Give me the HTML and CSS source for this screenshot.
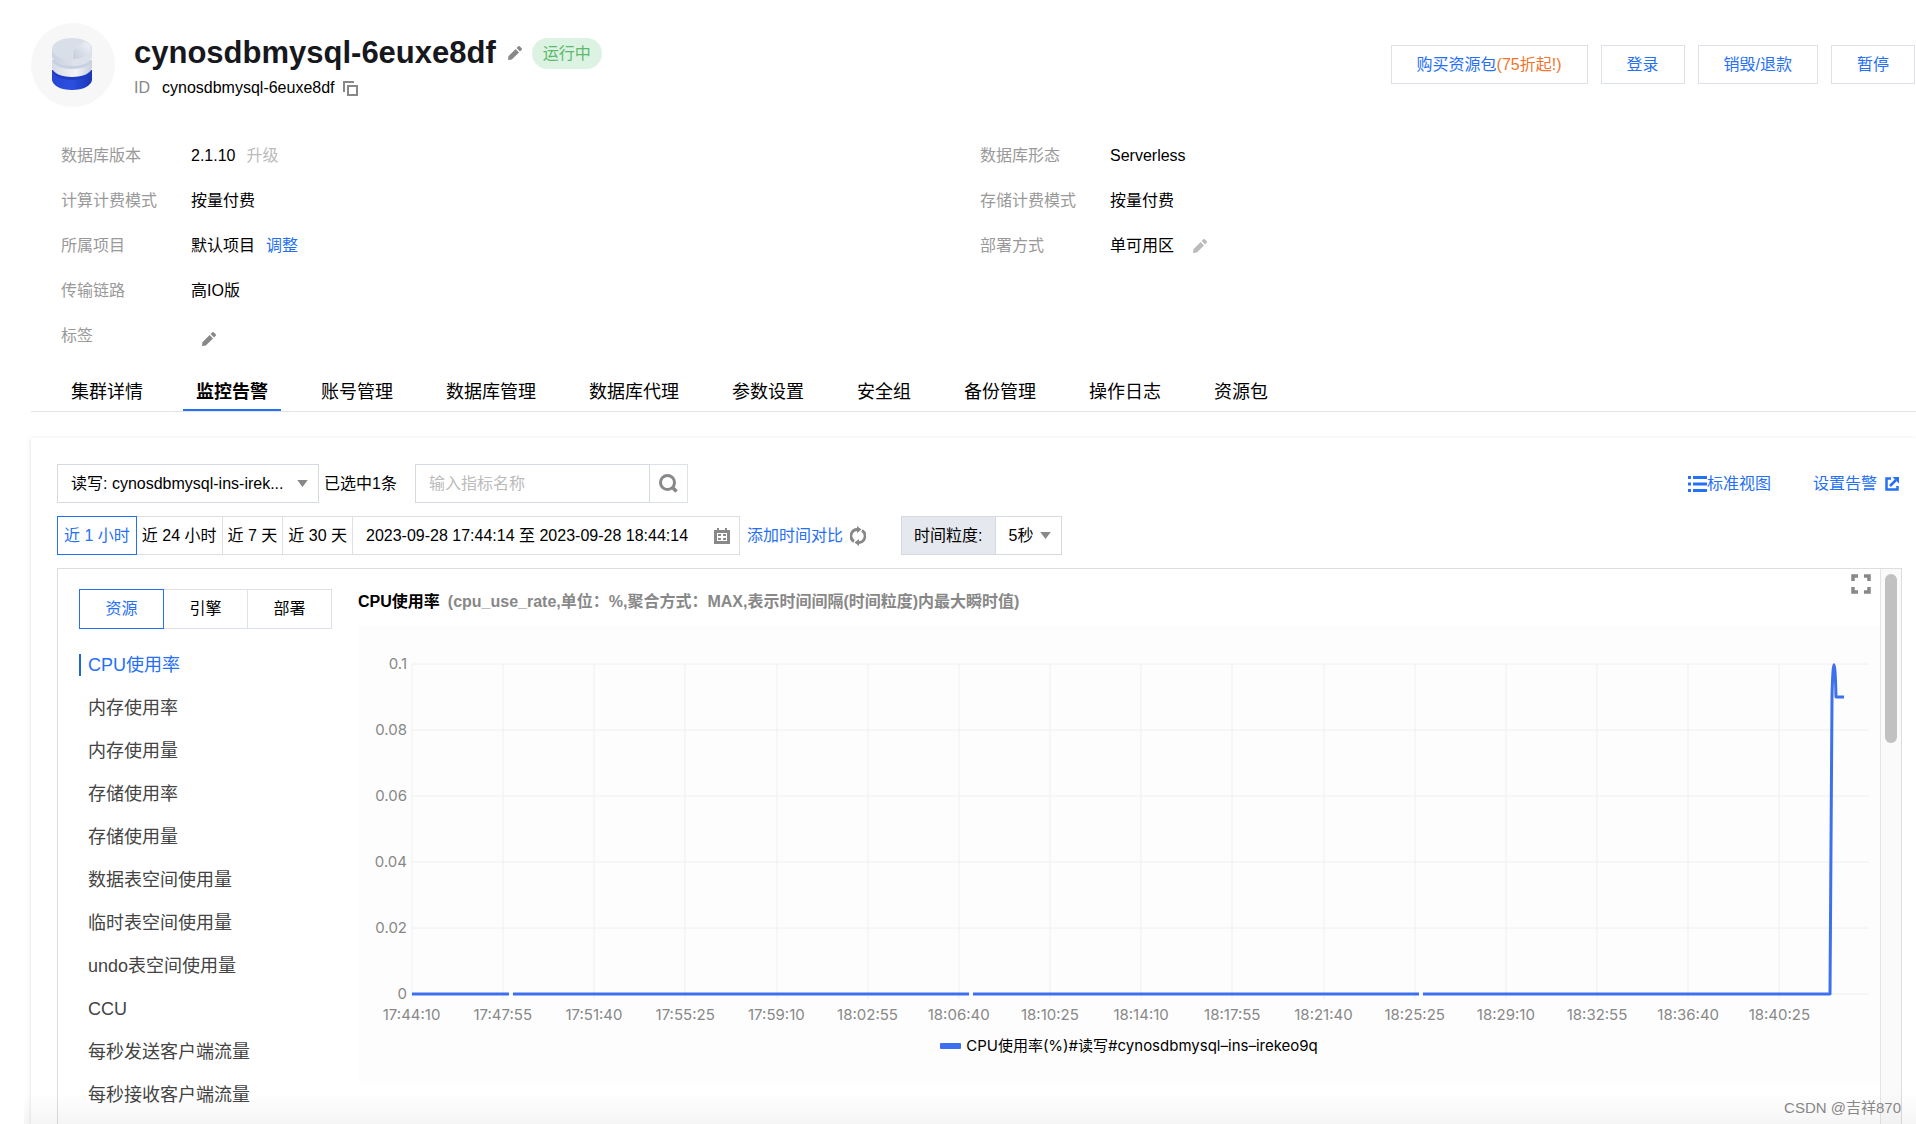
FILE: index.html
```html
<!DOCTYPE html>
<html lang="zh-CN">
<head>
<meta charset="utf-8">
<meta name="viewport" content="width=device-width, initial-scale=1">
<title>cynosdbmysql-6euxe8df - 监控告警</title>
<link rel="stylesheet" href="styles.css">
</head>
<body>
<svg class="sprite" aria-hidden="true">
  <symbol id="pencil" viewBox="0 0 14 14"><path d="M0 14l.4-3.800L7.600 3l3.400 3.400L3.800 13.600zM8.600 2l1.700-1.700a1 1 0 0 1 1.400 0l2 2a1 1 0 0 1 0 1.400L12 5.400z"/></symbol>
  <symbol id="caret" viewBox="0 0 12 8"><path d="M0 0h12L6 8z"/></symbol>
</svg>
<div class="app">
  <header class="header">
    <div class="avatar">
      <svg width="84" height="84" viewBox="0 0 84 84" aria-hidden="true">
        <defs>
          <linearGradient id="blue" x1="0" x2="1"><stop offset="0" stop-color="#2746d6"/><stop offset=".5" stop-color="#2b50e0"/><stop offset="1" stop-color="#1a36b4"/></linearGradient>
          <linearGradient id="white" x1="0" x2="1"><stop offset="0" stop-color="#d5dae6"/><stop offset=".6" stop-color="#f3f4f8"/><stop offset="1" stop-color="#c9cfdc"/></linearGradient>
          <linearGradient id="glass" x1="0" x2="1"><stop offset="0" stop-color="#cbd2e0"/><stop offset=".5" stop-color="#d9dfea"/><stop offset="1" stop-color="#dfe3ec"/></linearGradient>
          <linearGradient id="cut" x1="0" y1="1" x2="1" y2="0"><stop offset="0" stop-color="#c4ccdc"/><stop offset="1" stop-color="#f1f3f7"/></linearGradient>
        </defs>
        <path d="M21 47v10c1 6 9 10 20 10s19-4 20-10V47z" fill="url(#blue)"/>
        <path d="M21 47c1 6 9 10 20 10s19-4 20-10z" fill="#1f3cc4"/>
        <path d="M21 37v8c1 5 9 9 20 9s19-4 20-9v-8z" fill="url(#white)"/>
        <path d="M21 37c1 5 9 9 20 9s19-4 20-9z" fill="#c8d0e2"/>
        <path d="M21 26v8c1 5 9 9 20 9s19-4 20-9v-8z" fill="url(#glass)"/>
        <ellipse cx="41" cy="26" rx="20" ry="11" fill="#d8dfe9"/>
        <path d="M41 37V26l11-8c6 2 9 5 9 8v7c-3 7-11 10-20 10z" fill="#dce1ea"/>
        <path d="M42 36V27l12-8c5 2 6 5 5 9-2 5-9 8-17 8z" fill="url(#cut)"/>
      </svg>
    </div>
    <div class="identity">
      <div class="title-row">
        <h1 class="title">cynosdbmysql-6euxe8df</h1>
        <button class="icon-button" aria-label="编辑名称"><svg class="pencil"><use href="#pencil"/></svg></button>
        <span class="badge">运行中</span>
      </div>
      <div class="id-row">
        <span class="muted">ID</span>
        <span>cynosdbmysql-6euxe8df</span>
        <button class="icon-button copy" aria-label="复制"><svg width="15" height="15" viewBox="0 0 15 15"><path d="M1 11V1h10" fill="none" stroke="#888" stroke-width="2"/><path d="M5 5h9v9H5z" fill="none" stroke="#888" stroke-width="2"/></svg></button>
      </div>
    </div>
    <div class="actions">
      <button class="action">购买资源包<span class="promo">(75折起!)</span></button>
      <button class="action">登录</button>
      <button class="action">销毁/退款</button>
      <button class="action">暂停</button>
    </div>
  </header>

  <section class="info">
    <dl class="info-list">
      <div class="info-row"><dt>数据库版本</dt><dd>2.1.10<span class="disabled">升级</span></dd></div>
      <div class="info-row"><dt>计算计费模式</dt><dd>按量付费</dd></div>
      <div class="info-row"><dt>所属项目</dt><dd>默认项目<a class="link" href="#">调整</a></dd></div>
      <div class="info-row"><dt>传输链路</dt><dd>高IO版</dd></div>
      <div class="info-row"><dt>标签</dt><dd class="tag-value"><button class="icon-button" aria-label="编辑标签"><svg class="pencil"><use href="#pencil"/></svg></button></dd></div>
    </dl>
    <dl class="info-list">
      <div class="info-row"><dt>数据库形态</dt><dd>Serverless</dd></div>
      <div class="info-row"><dt>存储计费模式</dt><dd>按量付费</dd></div>
      <div class="info-row"><dt>部署方式</dt><dd class="deploy-value">单可用区<button class="icon-button" aria-label="编辑部署方式" disabled><svg class="pencil pale"><use href="#pencil"/></svg></button></dd></div>
    </dl>
  </section>

  <nav class="tabs">
    <a href="#">集群详情</a>
    <a href="#" class="active">监控告警</a>
    <a href="#">账号管理</a>
    <a href="#">数据库管理</a>
    <a href="#">数据库代理</a>
    <a href="#">参数设置</a>
    <a href="#">安全组</a>
    <a href="#">备份管理</a>
    <a href="#">操作日志</a>
    <a href="#">资源包</a>
  </nav>

  <main class="panel">
    <div class="toolbar">
      <div class="select instance">
        <select aria-label="实例"><option>读写: cynosdbmysql-ins-irek...</option></select>
        <svg class="caret"><use href="#caret"/></svg>
      </div>
      <span class="selected-count">已选中1条</span>
      <form class="search">
        <input type="text" placeholder="输入指标名称" aria-label="输入指标名称">
        <button type="button" aria-label="搜索"><svg width="19" height="19" viewBox="0 0 19 19"><circle cx="8.500" cy="8.500" r="7" fill="none" stroke="#888" stroke-width="3"/><path d="M13 13l4.500 4.500" stroke="#888" stroke-width="3.500"/></svg></button>
      </form>
      <div class="view-links">
        <a class="link view" href="#"><svg width="19" height="16" viewBox="0 0 19 16" fill="#2670f5" aria-hidden="true"><path d="M0 0h3v3H0zM0 6.500h3v3H0zM0 13h3v3H0zM5 0h14v3H5zM5 6.500h14v3H5zM5 13h14v3H5z"/></svg>标准视图</a>
        <a class="link alarm" href="#">设置告警<svg width="14" height="14" viewBox="0 0 14 14" aria-hidden="true"><path d="M6 1.500H1.500v11h11V9" fill="none" stroke="#2670f5" stroke-width="2.500"/><path d="M5 9l6-6" stroke="#2670f5" stroke-width="2.500"/><path d="M7.500 0H14v6.500z" fill="#2670f5"/></svg></a>
      </div>
    </div>

    <div class="toolbar">
      <div class="ranges">
        <button class="active">近 1 小时</button>
        <button>近 24 小时</button>
        <button>近 7 天</button>
        <button>近 30 天</button>
        <button class="date-range">2023-09-28 17:44:14 至 2023-09-28 18:44:14<svg width="16" height="16" viewBox="0 0 16 16" aria-hidden="true"><path d="M0 2h3V0h2v2h6V0h2v2h3v14H0zM3 5v8h10V5z" fill="#888" fill-rule="evenodd"/><path d="M4 6h3v2H4zM9 6h3v2H9zM4 10h3v2H4zM9 10h3v2H9z" fill="#888"/></svg></button>
      </div>
      <a class="link compare" href="#">添加时间对比</a>
      <button class="icon-button refresh" aria-label="刷新"><svg width="16" height="20" viewBox="0 0 16 20"><path d="M4 15.500A6.500 6.500 0 0 1 7.500 3.500M12 4.500A6.500 6.500 0 0 1 8.500 16.500" fill="none" stroke="#888" stroke-width="2.800"/><path d="M7 0l4.500 3.500L7 7zM9 13l-4.500 3.500L9 20z" fill="#888"/></svg></button>
      <label class="granularity" for="granularity">时间粒度:</label>
      <div class="select step">
        <select id="granularity"><option>5秒</option></select>
        <svg class="caret"><use href="#caret"/></svg>
      </div>
    </div>

    <div class="monitor">
      <aside class="side">
        <div class="side-tabs">
          <button class="active">资源</button>
          <button>引擎</button>
          <button>部署</button>
        </div>
        <ul class="metrics">
          <li><a href="#" class="active">CPU使用率</a></li>
          <li><a href="#">内存使用率</a></li>
          <li><a href="#">内存使用量</a></li>
          <li><a href="#">存储使用率</a></li>
          <li><a href="#">存储使用量</a></li>
          <li><a href="#">数据表空间使用量</a></li>
          <li><a href="#">临时表空间使用量</a></li>
          <li><a href="#">undo表空间使用量</a></li>
          <li><a href="#">CCU</a></li>
          <li><a href="#">每秒发送客户端流量</a></li>
          <li><a href="#">每秒接收客户端流量</a></li>
        </ul>
      </aside>
      <section class="detail">
        <div class="detail-head">
          <h2>CPU使用率<small>(cpu_use_rate,单位：%,聚合方式：MAX,表示时间间隔(时间粒度)内最大瞬时值)</small></h2>
          <button class="icon-button fullscreen" aria-label="全屏"><svg width="20" height="20" viewBox="0 0 20 20"><path d="M7 2H2v5M13 2h5v5M7 18H2v-5M13 18h5v-5" fill="none" stroke="#888" stroke-width="3.500"/></svg></button>
        </div>
        <div class="chart">
          <div class="plot-row">
            <div class="y-axis"><span>0.1</span><span>0.08</span><span>0.06</span><span>0.04</span><span>0.02</span><span>0</span></div>
            <svg class="plot" viewBox="0 0 1457 330" preserveAspectRatio="none" role="img" aria-label="CPU使用率">
              <path class="grid" d="M0 0H1457M0 66H1457M0 132H1457M0 198H1457M0 264H1457M0 330H1457M0 0V335M91 0V335M182 0V335M273 0V335M365 0V335M456 0V335M547 0V335M638 0V335M729 0V335M820 0V335M912 0V335M1003 0V335M1094 0V335M1185 0V335M1276 0V335M1367 0V335"/>
              <path class="series" d="M0 330H97M101 330H557M561 330H1007M1011 330H1418L1420 33C1421 -10 1423 -10 1424 33H1432"/>
            </svg>
          </div>
          <div class="x-axis"><span>17:44:10</span><span>17:47:55</span><span>17:51:40</span><span>17:55:25</span><span>17:59:10</span><span>18:02:55</span><span>18:06:40</span><span>18:10:25</span><span>18:14:10</span><span>18:17:55</span><span>18:21:40</span><span>18:25:25</span><span>18:29:10</span><span>18:32:55</span><span>18:36:40</span><span>18:40:25</span></div>
          <div class="legend"><span class="swatch"></span>CPU使用率(%)#读写#cynosdbmysql–ins–irekeo9q</div>
        </div>
      </section>
      <div class="scroll-track"><div class="scroll-thumb"></div></div>
    </div>
  </main>
  <div class="fade"></div>
  <div class="watermark">CSDN @吉祥870</div>
</div>
</body>
</html>
```

FILE: styles.css
```css
* {
  box-sizing: border-box;
}

body {
  margin: 0;
  background: #fff;
  color: #000;
  font-family: "Liberation Sans", "Noto Sans CJK SC", sans-serif;
  font-size: 16px;
  line-height: 22px;
}

button,
input,
select {
  margin: 0;
  padding: 0;
  border: 0;
  border-radius: 0;
  background: none;
  color: inherit;
  font: inherit;
}

a {
  color: inherit;
  text-decoration: none;
}

svg {
  display: block;
  flex: none;
}

.sprite {
  position: absolute;
  width: 0;
  height: 0;
}

.app {
  position: relative;
  display: flex;
  flex-direction: column;
  min-height: 100vh;
  overflow: hidden;
}

.link {
  color: #2670f5;
}

.muted {
  color: #888;
}

.icon-button {
  display: flex;
}

.pencil {
  width: 14px;
  height: 14px;
  fill: #888;
}

.pencil.pale {
  fill: #bbb;
}

.caret {
  width: 11px;
  height: 7px;
  fill: #888;
}

/* Header */

.header {
  display: flex;
  align-items: flex-start;
  padding: 23px 1px 0 31px;
}

.avatar {
  width: 84px;
  height: 84px;
  overflow: hidden;
  border-radius: 50%;
  background: #f7f7f7;
}

.identity {
  padding: 14px 0 0 19px;
}

.title-row {
  display: flex;
  align-items: center;
  height: 32px;
}

.title {
  margin: 0 12px 0 0;
  color: #16181d;
  font-size: 31px;
  line-height: 30px;
}

.badge {
  margin-left: 10px;
  padding: 0 11px;
  border-radius: 16px;
  background: #dcf3e4;
  color: #5bb96b;
  line-height: 31px;
}

.id-row {
  display: flex;
  align-items: center;
  gap: 12px;
  margin-top: 8px;
}

.copy {
  margin-left: -4px;
}

.actions {
  display: flex;
  gap: 13px;
  margin: 22px 0 0 auto;
}

.action {
  height: 39px;
  padding: 0 25px;
  border: 1px solid #dde1e8;
  color: #2670f5;
}

.promo {
  color: #f0742b;
}

/* Instance attributes */

.info {
  display: grid;
  grid-template-columns: 1fr 1fr;
  padding: 26px 17px 0 61px;
}

.info-list {
  margin: 0;
}

.info-row {
  display: flex;
  align-items: center;
  height: 45px;
}

.info-row dt {
  width: 130px;
  color: #999;
}

.info-row dd {
  display: flex;
  align-items: center;
  gap: 11px;
  margin: 0;
}

.info-row .tag-value {
  padding: 6px 0 0 11px;
}

.info-row .deploy-value {
  gap: 19px;
}

.disabled {
  color: #bbb;
}

/* Section tabs */

.tabs {
  display: flex;
  gap: 27px;
  margin: 17px 0 0 31px;
  padding-left: 27px;
  border-bottom: 1px solid #e5e5e5;
  font-size: 18px;
  line-height: 34px;
}

.tabs a {
  padding: 0 13px;
  border-bottom: 2px solid transparent;
}

.tabs .active {
  border-color: #2670f5;
  font-weight: 700;
}

/* Monitoring panel */

.panel {
  display: flex;
  flex: 1;
  flex-direction: column;
  gap: 13px;
  margin: 26px 0 0 31px;
  padding: 26px 14px 0 26px;
  box-shadow: 0 1px 4px rgba(0, 0, 0, 0.14);
}

.toolbar {
  display: flex;
  align-items: center;
  height: 39px;
}

.select {
  position: relative;
  height: 39px;
}

.select select {
  width: 100%;
  height: 100%;
  padding-left: 13px;
  border: 1px solid #d5d9e2;
  appearance: none;
}

.select .caret {
  position: absolute;
  top: 16px;
  right: 11px;
  pointer-events: none;
}

.instance {
  width: 262px;
}

.selected-count {
  margin: 0 18px 0 5px;
}

.search {
  display: flex;
}

.search input {
  width: 235px;
  height: 39px;
  padding: 0 13px;
  border: 1px solid #d5d9e2;
}

.search input::placeholder {
  color: #bbb;
}

.search button {
  display: grid;
  place-items: center;
  width: 38px;
  height: 39px;
  border: 1px solid #dde1e8;
  border-left: 0;
}

.view-links {
  display: flex;
  gap: 42px;
  margin-left: auto;
  padding-right: 3px;
}

.view-links a {
  display: flex;
  align-items: center;
}

.alarm {
  gap: 8px;
}

.ranges {
  display: flex;
}

.ranges button {
  height: 39px;
  padding: 0 5px;
  border: 1px solid #dddfe3;
  border-left: 0;
  white-space: nowrap;
}

.ranges .active {
  padding: 0 6px;
  border: 1px solid #2670f5;
  color: #2670f5;
}

.ranges .date-range {
  display: flex;
  align-items: center;
  gap: 26px;
  padding: 0 9px 0 13px;
}

.compare {
  margin: 0 7px;
}

.granularity {
  height: 39px;
  margin-left: 35px;
  padding: 0 12px;
  border: 1px solid #d5d9e2;
  border-right: 0;
  background: #e5e8ee;
  line-height: 38px;
}

.step {
  width: 67px;
}

/* Metrics box */

.monitor {
  display: flex;
  flex: 1;
  border: 1px solid #ddd;
  border-bottom: 0;
}

.side {
  width: 300px;
  padding: 20px 26px 0 21px;
}

.side-tabs {
  display: flex;
}

.side-tabs button {
  flex: 1;
  height: 40px;
  border: 1px solid #dde1e8;
  border-left: 0;
}

.side-tabs .active {
  border: 1px solid #2670f5;
  color: #2670f5;
}

.metrics {
  margin: 14px 0 0;
  padding: 0;
  color: #444;
  font-size: 18px;
  list-style: none;
}

.metrics li {
  display: flex;
  align-items: center;
  height: 43px;
}

.metrics a {
  padding-left: 7px;
  border-left: 2px solid transparent;
}

.metrics .active {
  border-color: #1f66d6;
  color: #2670f5;
}

.detail {
  flex: 1;
  min-width: 0;
}

.detail-head {
  display: flex;
  align-items: flex-start;
  justify-content: space-between;
  height: 57px;
  padding: 5px 9px 0 0;
}

.detail-head h2 {
  margin: 17px 0 0;
  font-size: 16px;
  line-height: 22px;
}

.detail-head small {
  margin-left: 8px;
  color: #888;
  font-size: 16px;
}

.chart {
  height: 457px;
  padding-top: 38px;
  background: #fdfdfd;
  font-family: Inter, "Noto Sans CJK SC", sans-serif;
  font-size: 15px;
}

.plot-row {
  display: flex;
  padding-right: 11px;
}

.y-axis {
  display: flex;
  flex-direction: column;
  justify-content: space-between;
  width: 54px;
  height: 352px;
  margin: -11px 0;
  padding-right: 5px;
  color: #888;
  text-align: right;
}

.plot {
  flex: 1;
  min-width: 0;
  height: 330px;
  overflow: visible;
}

.plot path {
  fill: none;
  vector-effect: non-scaling-stroke;
}

.grid {
  stroke: #f0f0f0;
  stroke-width: 1;
}

.series {
  stroke: #3d70f0;
  stroke-width: 3;
  stroke-linejoin: round;
}

.x-axis {
  display: grid;
  grid-template-columns: repeat(16, 1fr);
  margin: 10px 55px 0 8px;
  color: #888;
  text-align: center;
}

.legend {
  display: flex;
  align-items: center;
  justify-content: center;
  gap: 5px;
  margin-top: 9px;
  padding-left: 20px;
}

.legend,
.x-axis {
  line-height: 22px;
}

.swatch {
  width: 21px;
  height: 6px;
  border-radius: 1px;
  background: #3d70f0;
}

.scroll-track {
  width: 21px;
  padding: 5px 4px;
  border-left: 1px solid #e4e4e4;
  background: #fafafa;
}

.scroll-thumb {
  width: 12px;
  height: 169px;
  border-radius: 6px;
  background: #c1c1c1;
}

.fade {
  position: absolute;
  right: 0;
  bottom: 0;
  left: 24px;
  height: 32px;
  background: linear-gradient(rgba(0, 0, 0, 0), rgba(0, 0, 0, 0.04));
  pointer-events: none;
}

.watermark {
  position: absolute;
  right: 15px;
  bottom: 5px;
  color: #888;
  font-size: 15px;
}
```
